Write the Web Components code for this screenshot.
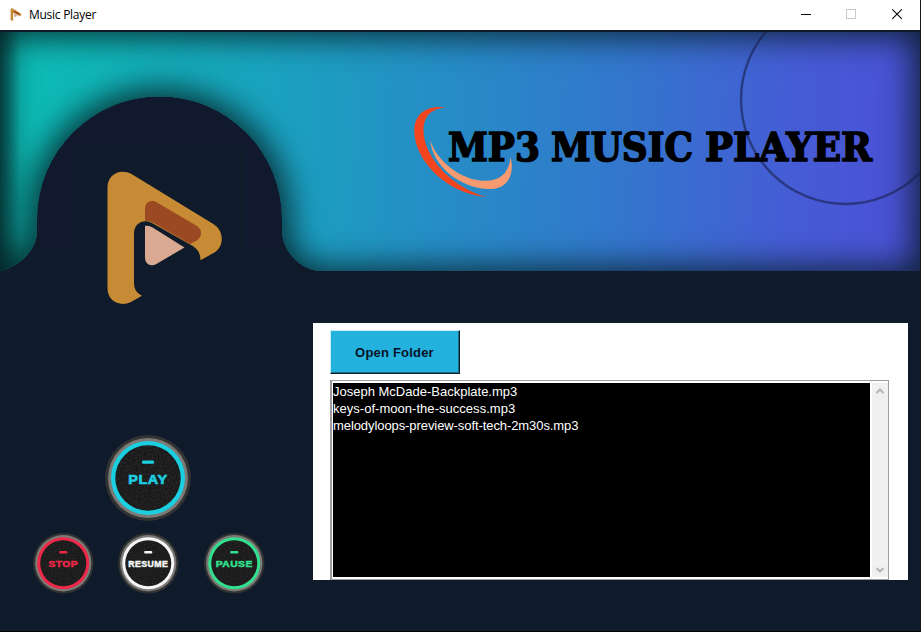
<!DOCTYPE html>
<html lang="en">
<head>
<meta charset="utf-8">
<title>Music Player</title>
<style>
html, body { margin: 0; height: 100%; overflow: hidden; background: #000; }
</style>
</head>
<body>
<music-window></music-window>
<script>
function define(name, html, setup) {
  const template = document.createElement('template');
  template.innerHTML = html;
  customElements.define(name, class extends HTMLElement {
    constructor() {
      super();
      this.attachShadow({ mode: 'open' }).append(template.content.cloneNode(true));
    }
    connectedCallback() { if (setup) setup(this, this.shadowRoot); }
  });
}

const LOGO = `
  <path fill="#c78b35" d="M107.5 187.500C107.500 174.500 120 168 131.500 174L212.500 223.500C224 230 225 245.500 214.500 252.500L200.500 260.200C200.300 252.500 197.500 248.600 191 245L152 223C143.500 218.500 134 223 134 234L134 282C134 289 136 292.500 142 295.700L131 302C119.500 307.500 107.500 300.500 107.500 288.500Z"/>
  <path fill="#9b4922" d="M145 209C145 202 151 199 157 202.500L197 226C203 230 202 237 197 240.500L190 244L158 225.500C153 222 149 220.500 145 220.700Z"/>
  <path fill="#dba991" d="M145 226C149 225.400 152 227 155 229L184.500 247.500L156 264.200C150.500 267 145 264 145 257.500Z"/>`;

define('app-logo', `
<style>:host { display: block; width: 12px; height: 13px; margin-top: -2px; } svg { display: block; }</style>
<svg width="12" height="13" viewBox="105 169 120 138">${LOGO}</svg>`);

define('title-bar', `
<style>
:host { display: flex; align-items: center; box-sizing: border-box; height: 30px; padding-left: 10px;
  background: #fff; color: #000; font: 12px "Open Sans", sans-serif; }
.name { margin: -2px 0 0 7px; letter-spacing: -0.27px; flex: 1; }
svg { display: block; }
</style>
<app-logo></app-logo><span class="name"><slot></slot></span>
<svg width="136" height="30" fill="none" shape-rendering="crispEdges">
  <path d="M17 14.500h10" stroke="#000"/>
  <rect x="62.500" y="9.500" width="9" height="9" stroke="#c8c8c8"/>
  <path d="M108.300 9.300l9.500 9.500M117.800 9.300l-9.500 9.500" stroke="#000" stroke-width="1.100" shape-rendering="auto"/>
</svg>`);

define('player-banner', `
<style>:host { display: block; overflow: hidden; } svg { display: block; } text { font-family: "DejaVu Serif", serif; font-weight: bold; font-size: 39.500px; }</style>
<svg width="921" height="601" viewBox="0 30 921 601">
  <defs>
    <linearGradient id="sky" gradientUnits="userSpaceOnUse" x1="0" y1="130" x2="920" y2="165">
      <stop offset="0" stop-color="#0cbcb4"/><stop offset=".1" stop-color="#10b6b8"/>
      <stop offset=".35" stop-color="#1d9cc1"/><stop offset=".68" stop-color="#3376cd"/>
      <stop offset=".86" stop-color="#455cd5"/><stop offset="1" stop-color="#4b50d5"/>
    </linearGradient>
    <linearGradient id="side"><stop offset="0" stop-color="#03191c" stop-opacity=".5"/><stop offset="1" stop-color="#03191c" stop-opacity="0"/></linearGradient>
    <clipPath id="edge"><path d="M0 32H920V270.700H320C300 270.700 282 250 282 231V219A122.500 122.500 0 0 0 37 219V231C37 250 20 266 0 271Z"/></clipPath>
    <filter id="soft" color-interpolation-filters="sRGB" filterUnits="userSpaceOnUse" x="-80" y="-50" width="1080" height="400"><feGaussianBlur stdDeviation="16"/></filter>
  </defs>
  <rect y="30" width="921" height="601" fill="#0f1a2a"/>
  <circle cx="159.500" cy="219" r="122.500" fill="#10192e"/>
  <rect x="75" y="145" width="169" height="200" fill="#0f1a2a"/>
  <rect y="250" width="330" height="100" fill="#0f1a2a"/>
  <g clip-path="url(#edge)">
    <rect y="32" width="920" height="239" fill="url(#sky)"/>
    <path filter="url(#soft)" fill="#03191c" fill-opacity=".84" fill-rule="evenodd" d="M-80 -50H1000V350H-80ZM6 37H913V267H326C304 267 290 250 290 231V219A130.500 130.500 0 0 0 29 219V231C29 246 20 254 6 258Z"/>
    <rect y="32" width="20" height="239" fill="url(#side)"/>
    <circle cx="845.500" cy="99.500" r="104.500" fill="none" stroke="#17204b" stroke-opacity=".6" stroke-width="2.400"/>
  </g>
  <path fill="#f4451f" d="M446 107.500C427 104.500 413.500 114 414.300 132C415 160 446 194 487 197C454 189 424 158 423.500 131C423.500 115 432 108.500 446 107.500Z"/>
  <path fill="#f79a70" d="M430.300 140C436 160 460 180.500 485 180.800C500 181 509 173 510.500 157C515 174 508 188.500 491 189C461 189.500 432 166 430.300 140Z"/>
  <g stroke="#000" stroke-width="1.600">
    <text x="448" y="160.500" textLength="92" lengthAdjust="spacingAndGlyphs">MP3</text>
    <text x="551" y="160.500" textLength="142" lengthAdjust="spacingAndGlyphs">MUSIC</text>
    <text x="705" y="160.500" textLength="167" lengthAdjust="spacingAndGlyphs">PLAYER</text>
  </g>
  ${LOGO}
</svg>`);

define('round-button', `
<style>
:host { display: block; width: var(--size); height: var(--size); }
svg { display: block; width: 100%; height: 100%; overflow: visible; }
text { font: bold 13.800px "Liberation Sans", Arial, sans-serif; stroke-width: .7px; letter-spacing: .6px; }
</style>
<svg viewBox="-43 -43 86 86">
  <defs><filter id="grain" x="0" y="0" width="1" height="1"><feTurbulence type="fractalNoise" baseFrequency=".5" numOctaves="2"/><feColorMatrix values="0 0 0 0 .25  0 0 0 0 .25  0 0 0 0 .25  .3 0 0 0 -.1"/><feComposite in2="SourceGraphic" operator="in"/></filter></defs>
  <circle r="43" fill="#313333"/><circle r="40" fill="#7c7977"/>
  <circle class="glow" r="37"/><circle r="32.700" fill="#181818"/>
  <circle r="32.200" fill="#222" filter="url(#grain)"/>
  <rect class="bar" rx="1.200"/><text lengthAdjust="spacingAndGlyphs"></text>
</svg>`, (host, root) => {
  const color = host.getAttribute('color');
  const size = +host.getAttribute('size');
  const unit = 86 / size;
  host.style.setProperty('--size', size + 'px');
  root.querySelector('.glow').setAttribute('fill', color);
  const bar = root.querySelector('.bar');
  const bw = +host.getAttribute('bar') * unit;
  bar.setAttribute('x', -bw / 2); bar.setAttribute('y', -17.500);
  bar.setAttribute('width', bw); bar.setAttribute('height', size > 70 ? 3.200 : 3.600);
  bar.setAttribute('fill', color);
  const t = root.querySelector('text');
  const w = +host.getAttribute('span') * unit;
  t.textContent = host.getAttribute('label');
  t.setAttribute('x', -w / 2);
  t.setAttribute('y', +host.getAttribute('base') * unit);
  t.setAttribute('textLength', w);
  t.setAttribute('fill', color);
  t.setAttribute('stroke', color);
  t.style.fontSize = +host.getAttribute('font') * unit + 'px';
});

define('player-controls', `
<style>
:host { display: flex; flex-direction: column; justify-content: flex-end; align-items: center; width: 296px; box-sizing: border-box; padding-bottom: 38px; }
.row { display: flex; gap: 25px; margin: 11.500px 0 0 1.400px; }
</style>
<round-button label="PLAY" color="#1bcfe0" size="86" bar="12" span="39.500" base="5.700" font="13.700"></round-button>
<div class="row">
  <round-button label="STOP" color="#ed2848" size="60.500" bar="8" span="29.500" base="4" font="9.600"></round-button>
  <round-button label="RESUME" color="#f6f6f6" size="60.500" bar="8" span="40" base="4" font="8.800"></round-button>
  <round-button label="PAUSE" color="#32e090" size="60.500" bar="8" span="37" base="4" font="9.800"></round-button>
</div>`);

define('scroll-track', `
<style>:host { display: block; width: 16px; background: #f0f0f0; }
.in { height: 100%; display: flex; flex-direction: column; justify-content: space-between; align-items: center; padding: 4px 1px 3px 0; box-sizing: border-box; }</style>
<div class="in">
<svg width="10" height="8" fill="none" stroke="#b4b4b4" stroke-width="2"><path d="M1.500 6L5 2.500L8.500 6"/></svg>
<svg width="10" height="8" fill="none" stroke="#b4b4b4" stroke-width="2"><path d="M1.500 2L5 5.500L8.500 2"/></svg>
</div>`);

define('song-list', `
<style>
:host { display: flex; box-sizing: border-box; height: 200px; width: 559px; border: 1px solid #a09a9c; border-left-width: 2px; background: #fff; padding: 2px 0 2px 1px; gap: 2px; }
.songs { flex: 1; background: #000; color: #fff; font: 13px/17px "Liberation Sans", Arial, sans-serif; white-space: nowrap; }
</style>
<div class="songs"><slot></slot></div><scroll-track></scroll-track>`);

define('song-item', `<style>:host { display: block; }</style><slot></slot>`,
  host => { host.style.letterSpacing = host.getAttribute('tracking') || 'normal'; });

define('push-button', `
<style>
:host { display: flex; align-items: center; justify-content: center; box-sizing: border-box; width: 130px; height: 44px; padding-right: 1px;
  background: #23b1de; border: 1px solid; border-color: #c9edf8 #101c26 #101c26 #c9edf8; box-shadow: inset -1px -1px #176f8a;
  color: #081226; font: bold 13px "Liberation Sans", Arial, sans-serif; letter-spacing: .2px; }
</style><slot></slot>`);

define('library-panel', `
<style>
:host { display: flex; flex-direction: column; gap: 6px; box-sizing: border-box; width: 595px; height: 257px; padding: 7px 0 0 17px; background: #fff; }
</style><slot></slot>`);

define('music-window', `
<style>
:host { display: flex; flex-direction: column; box-sizing: border-box; width: 921px; height: 631px; border-right: 1px solid #17191f; }
.client { display: grid; grid-template-columns: 920px; height: 601px; }
.client > * { grid-area: 1 / 1; }
.content { display: flex; }
library-panel { margin: 293px 0 0 17px; }
</style>
<title-bar>Music Player</title-bar>
<div class="client">
  <player-banner></player-banner>
  <div class="content">
    <player-controls></player-controls>
    <library-panel>
      <push-button>Open Folder</push-button>
      <song-list>
        <song-item>Joseph McDade-Backplate.mp3</song-item>
        <song-item tracking=".03px">keys-of-moon-the-success.mp3</song-item>
        <song-item tracking="-.08px">melodyloops-preview-soft-tech-2m30s.mp3</song-item>
      </song-list>
    </library-panel>
  </div>
</div>`);
</script>
</body>
</html>
